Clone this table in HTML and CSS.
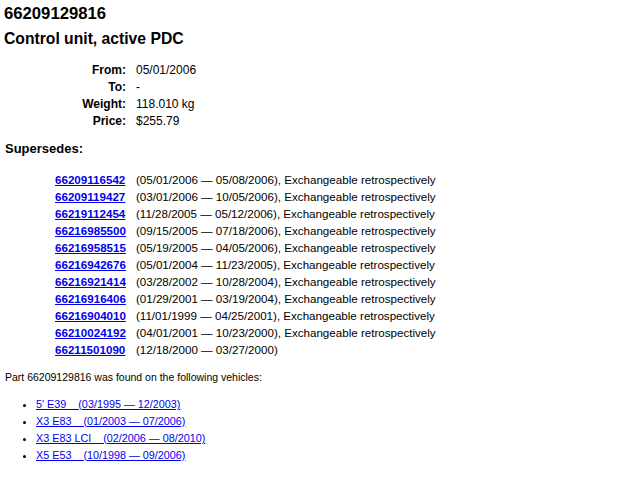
FILE: index.html
```html
<!DOCTYPE html>
<html>
<head>
<meta charset="utf-8">
<link rel="stylesheet" href="styles.css">
</head>
<body>
<h1 class="part-no">66209129816</h1>
<h2 class="part-name">Control unit, active PDC</h2>
<table class="info">
  <tr><th>From:</th><td>05/01/2006</td></tr>
  <tr><th>To:</th><td>-</td></tr>
  <tr><th>Weight:</th><td>118.010 kg</td></tr>
  <tr><th>Price:</th><td>$255.79</td></tr>
</table>
<h3 class="section">Supersedes:</h3>
<table class="supersedes">
  <tr><td class="pn"><a href="#">66209116542</a></td><td>(05/01/2006 — 05/08/2006), Exchangeable retrospectively</td></tr>
  <tr><td class="pn"><a href="#">66209119427</a></td><td>(03/01/2006 — 10/05/2006), Exchangeable retrospectively</td></tr>
  <tr><td class="pn"><a href="#">66219112454</a></td><td>(11/28/2005 — 05/12/2006), Exchangeable retrospectively</td></tr>
  <tr><td class="pn"><a href="#">66216985500</a></td><td>(09/15/2005 — 07/18/2006), Exchangeable retrospectively</td></tr>
  <tr><td class="pn"><a href="#">66216958515</a></td><td>(05/19/2005 — 04/05/2006), Exchangeable retrospectively</td></tr>
  <tr><td class="pn"><a href="#">66216942676</a></td><td>(05/01/2004 — 11/23/2005), Exchangeable retrospectively</td></tr>
  <tr><td class="pn"><a href="#">66216921414</a></td><td>(03/28/2002 — 10/28/2004), Exchangeable retrospectively</td></tr>
  <tr><td class="pn"><a href="#">66216916406</a></td><td>(01/29/2001 — 03/19/2004), Exchangeable retrospectively</td></tr>
  <tr><td class="pn"><a href="#">66216904010</a></td><td>(11/01/1999 — 04/25/2001), Exchangeable retrospectively</td></tr>
  <tr><td class="pn"><a href="#">66210024192</a></td><td>(04/01/2001 — 10/23/2000), Exchangeable retrospectively</td></tr>
  <tr><td class="pn"><a href="#">66211501090</a></td><td>(12/18/2000 — 03/27/2000)</td></tr>
</table>
<p class="found">Part 66209129816 was found on the following vehicles:</p>
<ul class="vehicles">
  <li><a href="#">5' E39 &nbsp;&nbsp;&nbsp;(03/1995 — 12/2003)</a></li>
  <li><a href="#">X3 E83 &nbsp;&nbsp;&nbsp;(01/2003 — 07/2006)</a></li>
  <li><a href="#">X3 E83 LCI &nbsp;&nbsp;&nbsp;(02/2006 — 08/2010)</a></li>
  <li><a href="#">X5 E53 &nbsp;&nbsp;&nbsp;(10/1998 — 09/2006)</a></li>
</ul>
</body>
</html>
```
FILE: styles.css
```css
body {
  margin: 0;
  padding: 4px 4px 4px 5px;
  font-family: "Liberation Sans", Arial, sans-serif;
  color: #000;
  background: #fff;
}
.part-no, .part-name {
  font-weight: bold;
  margin: 0 0 0 -1px;
  line-height: 20px;
}
.part-no { font-size: 16.7px; margin-bottom: 5px; }
.part-name { font-size: 15.7px; }
.info {
  border-collapse: collapse;
  margin: 12px 0 0 0;
  font-size: 12px;
}
.info th {
  width: 121px;
  text-align: right;
  font-weight: bold;
  padding: 0 5px 0 0;
  height: 17px;
}
.info td {
  padding: 0 0 0 5px;
  height: 17px;
}
.section {
  font-size: 13px;
  font-weight: bold;
  margin: 11px 0 0 0;
  line-height: 17px;
}
.supersedes {
  border-collapse: collapse;
  margin: 14px 0 0 45px;
  font-size: 11.6px;
}
.supersedes td {
  padding: 0 5px;
  height: 17px;
}
.supersedes a {
  color: #0000ee;
  font-weight: bold;
}
.found {
  font-size: 10.5px;
  margin: 12px 0 0 0;
  line-height: 14px;
}
.vehicles {
  font-size: 10.8px;
  margin: 12px 0 0 0;
  padding-left: 31px;
  line-height: 17px;
}
.vehicles a { color: #0000ee; }
```
